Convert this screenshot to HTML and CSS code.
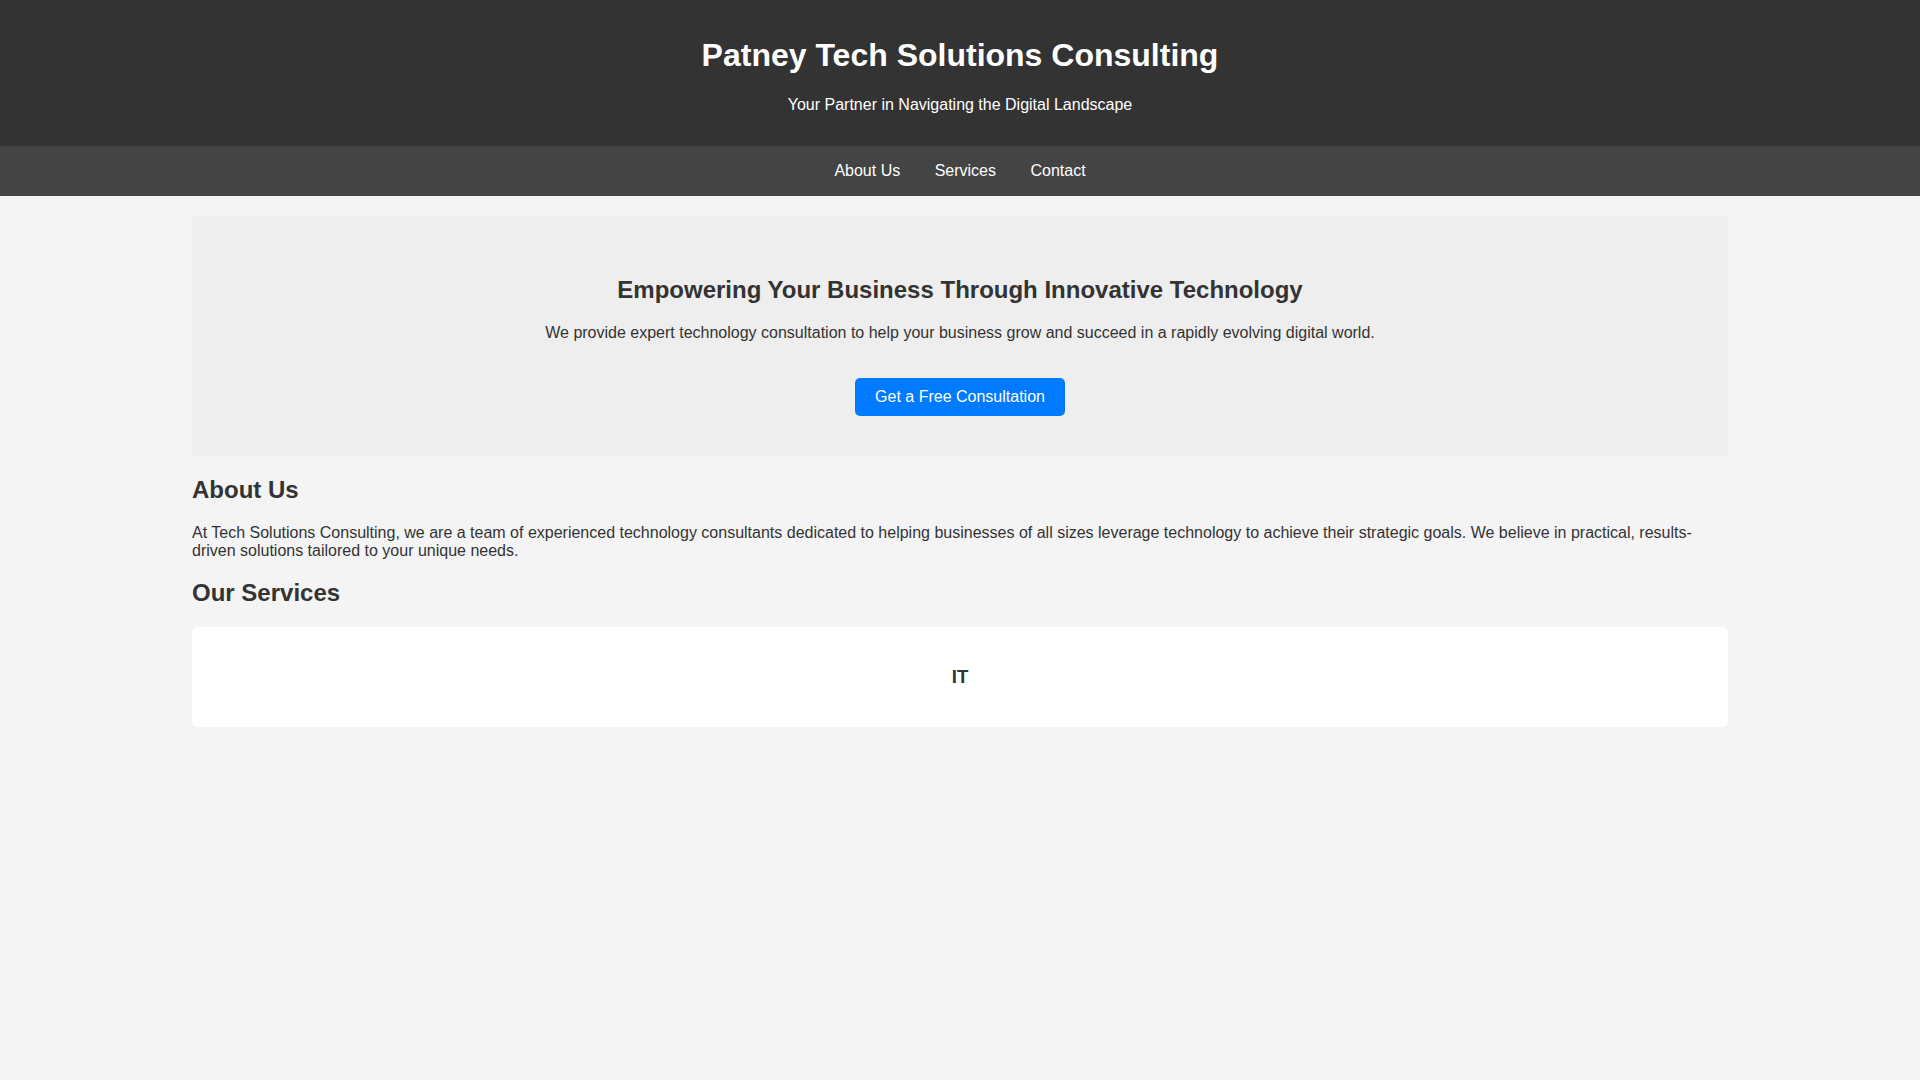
FILE: index.html
```html
<!DOCTYPE html>
<html lang="en">
<head>
<meta charset="utf-8">
<title>Patney Tech Solutions Consulting</title>
<link rel="stylesheet" href="styles.css">
</head>
<body>
<header class="site-header">
  <h1>Patney Tech Solutions Consulting</h1>
  <p>Your Partner in Navigating the Digital Landscape</p>
</header>
<nav class="site-nav">
  <a href="#about">About Us</a>
  <a href="#services">Services</a>
  <a href="#contact">Contact</a>
</nav>
<main class="container">
  <section class="hero">
    <h2>Empowering Your Business Through Innovative Technology</h2>
    <p>We provide expert technology consultation to help your business grow and succeed in a rapidly evolving digital world.</p>
    <a class="btn" href="#contact">Get a Free Consultation</a>
  </section>
  <section id="about" class="about">
    <h2>About Us</h2>
    <p>At Tech Solutions Consulting, we are a team of experienced technology consultants dedicated to helping businesses of all sizes leverage technology to achieve their strategic goals. We believe in practical, results-driven solutions tailored to your unique needs.</p>
  </section>
  <section id="services" class="services">
    <h2>Our Services</h2>
    <div class="services-grid">
      <div class="service-card">
        <h3>IT</h3>
      </div>
    </div>
  </section>
</main>
</body>
</html>
```
FILE: styles.css
```css
body {
  margin: 0;
  font-family: "Liberation Sans", Arial, sans-serif;
  background: #f4f4f4;
  color: #333;
}

.site-header {
  background: #333;
  color: #fff;
  text-align: center;
  padding: 1rem 0;
}

.site-header h1 {
  font-size: 2em;
  margin: 0.67em 0;
}

.site-nav {
  background: #444;
  text-align: center;
  padding: 16px 0;
}

.site-nav a {
  color: #fff;
  text-decoration: none;
  margin: 0 15px;
}

.container {
  width: 80%;
  margin: 0 auto;
  padding: 20px 0;
}

.hero {
  background: #eee;
  text-align: center;
  padding: 40px;
}

.btn {
  display: inline-block;
  margin-top: 20px;
  padding: 10px 20px;
  background: #007bff;
  color: #fff;
  text-decoration: none;
  border-radius: 5px;
}

.services-grid {
  display: grid;
  grid-template-columns: 1fr;
  gap: 20px;
}

.service-card {
  background: #fff;
  padding: 20px;
  border-radius: 5px;
  text-align: center;
}
```
